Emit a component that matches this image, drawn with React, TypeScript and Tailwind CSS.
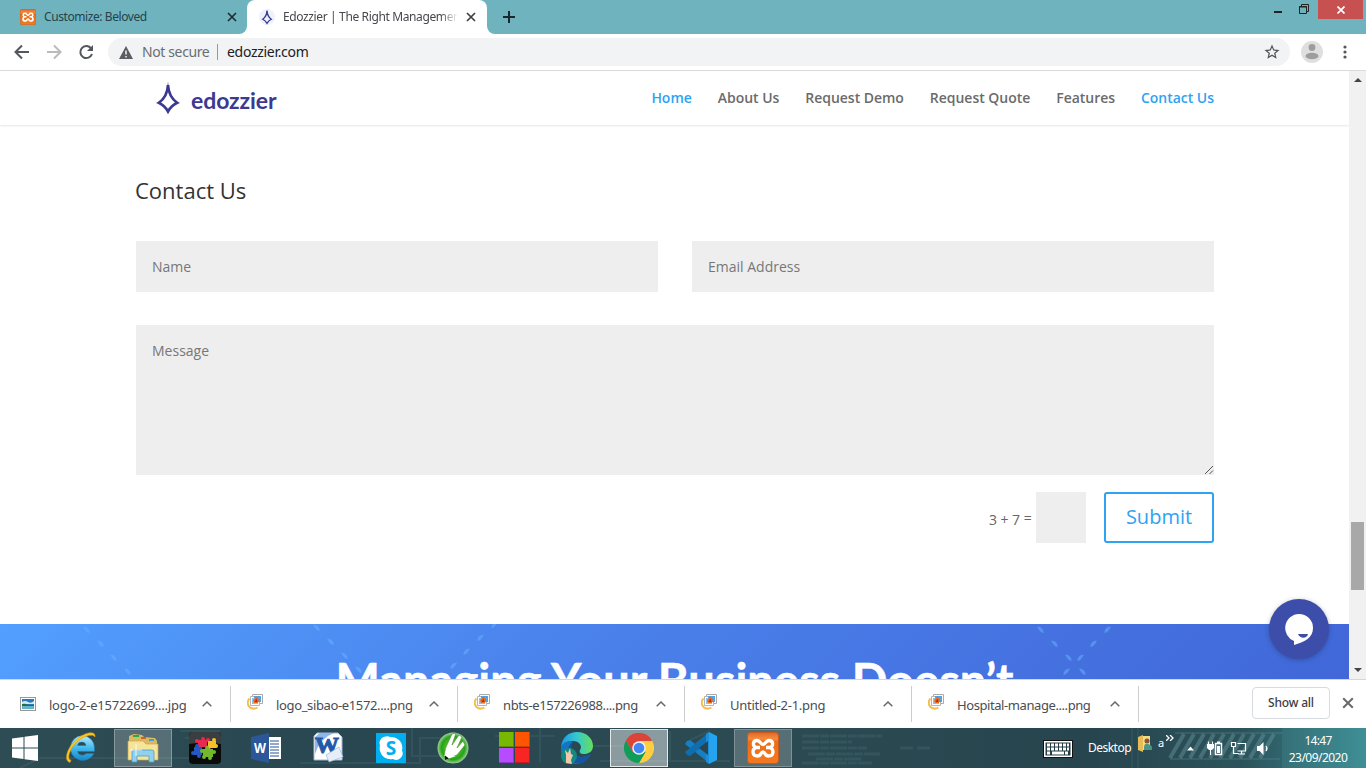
import React from "react";

const ui = "font-['Noto_Sans','Open_Sans',sans-serif]";

function Xampp({ className }: { className: string }) {
  return (
    <svg viewBox="0 0 32 32" className={className}>
      <defs>
        <linearGradient id="xg" x1="0" y1="0" x2="0" y2="1">
          <stop offset="0" stopColor="#e2662a" />
          <stop offset=".2" stopColor="#f58a3c" />
          <stop offset=".3" stopColor="#ee6d15" />
          <stop offset="1" stopColor="#f5791f" />
        </linearGradient>
      </defs>
      <rect x=".5" y=".5" width="31" height="31" rx="3" fill="url(#xg)" stroke="#c75a1c" />
      <path d="M16 12.500C13.500 12.500 13.500 8.500 10 8.500C5.500 8.500 5 14.500 9.500 15.500C4.500 17 5 24 10.500 24C14.500 24 13.500 20 16 20C18.500 20 17.500 24 21.500 24C27 24 27.500 17 22.500 15.500C27 14.500 26.500 8.500 22 8.500C18.500 8.500 18.500 12.500 16 12.500ZM9.500 15.500h3.500M22.500 15.500H19" fill="none" stroke="#fff" strokeWidth="3.300" strokeLinejoin="round" />
    </svg>
  );
}

function Star4({ className }: { className: string }) {
  return (
    <svg viewBox="0 0 24 34" className={className}>
      <path d="M12 4C11.500 12.500 9 17.500 2.800 21.800C7.500 24 10 27 12 30.500C14 27 16.500 24 21.200 21.800C15 17.500 12.500 12.500 12 4Z" fill="none" stroke="#3b3991" strokeWidth="2.700" strokeLinejoin="miter" strokeMiterlimit="6" />
      <path d="M12 .8l1.300 9h-2.600z" fill="#3b3991" />
    </svg>
  );
}

function TabClose({ className }: { className: string }) {
  return (
    <svg viewBox="0 0 10 10" className={className}>
      <path d="M1 1l8 8M9 1l-8 8" fill="none" stroke="currentColor" strokeWidth="1.700" />
    </svg>
  );
}

function TabStrip() {
  return (
    <div className={`flex h-[34px] shrink-0 bg-[#6eb3be] text-[12px] ${ui}`}>
      <div className="flex h-[34px] w-[247px] items-center rounded-br-lg pl-5">
        <Xampp className="size-4" />
        <span className="ml-2 w-[183px] whitespace-nowrap text-[#27424a] tracking-[-0.42px]">Customize: Beloved</span>
        <TabClose className="size-[10px] text-[#1f2d30]" />
      </div>
      <div className="relative flex w-[240px] items-center rounded-t-lg bg-white pl-[12px]">
        <svg viewBox="0 0 8 8" className="absolute -left-2 bottom-0 size-2"><path d="M8 0v8H0a8 8 0 0 0 8-8z" fill="#fff" /></svg>
        <svg viewBox="0 0 8 8" className="absolute -right-2 bottom-0 size-2"><path d="M0 0v8h8a8 8 0 0 1-8-8z" fill="#fff" /></svg>
        <span className="flex size-4 items-center justify-center rounded-full bg-[#edf2fb]"><Star4 className="h-[16px] w-[12px]" /></span>
        <span className="ml-2 w-[175px] overflow-hidden whitespace-nowrap text-[#45484c] tracking-[-0.37px] [mask-image:linear-gradient(to_right,black_90%,transparent)]">Edozzier | The Right Managemen</span>
        <TabClose className="ml-[8px] size-[10px] text-[#3c4043]" />
      </div>
      <svg viewBox="0 0 12 12" className="ml-[16px] mt-[11px] size-3"><path d="M6 0v12M0 6h12" stroke="#18282c" strokeWidth="2" /></svg>
      <div className="ml-auto flex pr-[3px]">
        <svg viewBox="0 0 46 20" className="h-5 w-[46px]">
          <path d="M2 12h8" stroke="#222" strokeWidth="2" />
          <path d="M27.500 6.500h7v7h-7zM27 7h8M29.500 6v-1.500h7v7h-1.500" fill="none" stroke="#222" />
        </svg>
        <div className="flex h-[19px] w-[45px] items-center justify-center bg-[#c75050]">
          <svg viewBox="0 0 8 8" className="size-2"><path d="M.5 .5l7 7M7.500 .5l-7 7" stroke="#fff" strokeWidth="1.700" /></svg>
        </div>
      </div>
    </div>
  );
}

function Toolbar() {
  return (
    <div className={`flex h-[37px] shrink-0 items-start border-b border-[#d8dadc] bg-white pt-1 text-[14px] ${ui}`}>
      <svg viewBox="0 0 108 28" className="h-7 w-[108px]" fill="none" strokeWidth="2">
        <path d="M29 14H16.500M22 7.500L15.500 14l6.500 6.500" stroke="#53575b" />
        <path d="M47 14h12.500M54 7.500l6.500 6.500l-6.500 6.500" stroke="#b9bbbd" />
        <path d="M90.800 10A6 6 0 1 0 92 16" stroke="#53575b" />
        <path d="M93 7v6h-6z" fill="#53575b" />
      </svg>
      <div className="flex h-7 w-[1182px] items-center rounded-full bg-[#f1f3f4] pl-[11px] pr-[9px]">
        <svg viewBox="0 0 14 13" className="h-[13px] w-[14px]"><path d="M7 0l7 13H0z" fill="#5a5d61" /><path d="M7 4.500v4M7 10v1.500" stroke="#f1f3f4" strokeWidth="1.500" /></svg>
        <span className="-mt-px ml-[9px] w-[67px] whitespace-nowrap text-[#6a6d71] tracking-[-0.38px]">Not secure</span>
        <span className="ml-2 h-4 w-px bg-[#96999c]" />
        <span className="-mt-px ml-[9px] whitespace-nowrap text-[#202124] tracking-[-0.3px]">edozzier.com</span>
        <svg viewBox="0 0 24 24" className="ml-auto size-[18px]"><path d="M22 9.240l-7.190-.62L12 2 9.190 8.630 2 9.240l5.460 4.730L5.820 21 12 17.270 18.180 21l-1.630-7.030L22 9.240zM12 15.400l-3.760 2.270 1-4.280-3.320-2.880 4.380-.38L12 6.100l1.710 4.040 4.380.38-3.320 2.880 1 4.280L12 15.400z" fill="#4f5357" /></svg>
      </div>
      <svg viewBox="0 0 22 22" className="ml-[11px] mt-[3px] size-[22px]"><circle cx="11" cy="11" r="11" fill="#dfdfdf" /><circle cx="11" cy="6.500" r="3.400" fill="#9d9d9d" /><ellipse cx="11" cy="15" rx="6.500" ry="3.300" fill="#9d9d9d" /></svg>
      <svg viewBox="0 0 4 14" className="ml-[20px] mt-[7px] h-[14px] w-1" fill="#53575b"><circle cx="2" cy="2" r="1.600" /><circle cx="2" cy="7" r="1.600" /><circle cx="2" cy="12" r="1.600" /></svg>
    </div>
  );
}

function SiteHeader() {
  return (
    <header className="relative flex h-[54px] shrink-0 items-start bg-white pl-[156px] shadow-[0_1px_2px_rgba(0,0,0,0.1)]">
      <Star4 className="mt-[10px] h-[34px] w-[24px]" />
      <span className="ml-[11px] mt-[13px] w-[87px] font-[Lato,sans-serif] text-[23px] font-bold leading-[32px] tracking-[-0.1px] text-[#3b3991]">edozzier</span>
      <nav className="ml-auto mr-[135px] mt-[17px] flex gap-[26px] whitespace-nowrap font-['Open_Sans',sans-serif] text-[14px] font-semibold leading-5 tracking-[-0.03px] text-[#6b6b6b]">
        <a className="text-[#2ea3f2]">Home</a>
        <a>About Us</a>
        <a>Request Demo</a>
        <a>Request Quote</a>
        <a>Features</a>
        <a className="text-[#2ea3f2]">Contact Us</a>
      </nav>
    </header>
  );
}

function ContactForm() {
  return (
    <section className="h-[499px] shrink-0 px-[135px] pt-[49px] font-['Open_Sans',sans-serif] text-[14px] text-[#666]">
      <h1 className="h-[67px] text-[22px] leading-[32px] text-[#333]">Contact Us</h1>
      <div className="ml-px flex gap-[34px]">
        <div className="h-[51px] w-[522px] bg-[#eee] px-4 leading-[51px] text-[#777]">Name</div>
        <div className="h-[51px] w-[522px] bg-[#eee] px-4 leading-[51px] text-[#777]">Email Address</div>
      </div>
      <div className="ml-px mt-[33px] flex h-[150px] justify-between bg-[#eee] pl-4 pt-4 text-[#777]">
        <span className="leading-5">Message</span>
        <svg viewBox="0 0 10 10" className="size-[10px] self-end"><path d="M1 9l8-8M5.500 9l3.500-3.500" stroke="#555" /></svg>
      </div>
      <div className="mt-[17px] flex justify-end">
        <span className="mt-[16px] w-[47px] whitespace-nowrap leading-6 tracking-[-0.05px]">3 + 7 <span className="relative -top-[2px]">=</span></span>
        <div className="h-[51px] w-[50px] bg-[#eee]" />
        <button className="ml-[18px] h-[51px] w-[110px] rounded-[3px] border-2 border-[#2ea3f2] pb-px text-[20px] text-[#2ea3f2]">Submit</button>
      </div>
    </section>
  );
}

const drops: [number, number, number][] = [
  [86, 6, 0], [100, 20, 0], [113, 34, 0], [127, 48, 0],
  [316, 4, 0], [330, 18, 0], [344, 32, 0], [358, 46, 0],
  [454, 42, 1], [467, 28, 1], [481, 14, 1], [495, 1, 1],
  [1040, 6, 0], [1054, 20, 0], [1068, 34, 0], [1082, 48, 0],
  [1108, 6, 1], [1094, 20, 1], [1081, 34, 1], [1067, 48, 1],
];

function Hero() {
  return (
    <section className="relative flex min-h-0 flex-1 justify-center overflow-hidden bg-[linear-gradient(135deg,#529fff_0%,#4a80ea_45%,#4167d8_100%)]">
      <svg viewBox="0 0 1349 55" className="absolute left-0 top-0 h-[55px] w-[1349px]">
        {drops.map(([x, y, flip], i) => (
          <path key={i} d="M-3-3C0-4 4-1 3.500 3C1 3-1 0-3-3Z" transform={`translate(${x} ${y}) scale(${flip ? -1 : 1} 1)`} fill="#68b3ff" opacity=".5" />
        ))}
      </svg>
      <h2 className="relative mt-[26px] whitespace-nowrap font-[Lato,sans-serif] text-[47px] font-bold leading-[60px] text-white [-webkit-text-stroke:0.5px_white]">Managing Your Business Doesn’t</h2>
    </section>
  );
}

function Scrollbar() {
  return (
    <div className="relative flex w-[17px] shrink-0 flex-col items-center bg-[#f1f1f1]">
      <svg viewBox="0 0 8 4" className="mt-[7px] h-1 w-2"><path d="M4 0l4 4H0z" fill="#444" /></svg>
      <div className="mt-[440px] h-[68px] w-[13px] bg-[#a8a8a8]" />
      <svg viewBox="0 0 8 4" className="mb-[7px] mt-auto h-1 w-2"><path d="M4 4l4-4H0z" fill="#444" /></svg>
    </div>
  );
}

function JpgIcon() {
  return (
    <svg viewBox="0 0 16 14" className="-mt-px h-[14px] w-4"><rect x=".5" y=".5" width="15" height="13" fill="#fff" stroke="#999" /><path d="M2 2h12v10H2z" fill="#2d79b8" /><path d="M2 5q3-2 6 0t6-1v3H2z" fill="#cfe9f7" /><path d="M2 7q4-1 6 1h6v2H2z" fill="#286c50" /><path d="M2 9h12v3H2z" fill="#63b6c6" /></svg>
  );
}

function PngIcon() {
  return (
    <svg viewBox="0 0 16 16" className="-mt-[4px] size-4"><path d="M2.500 4.500A6 6 0 0 0 2.500 13Q6 16 10.500 13.500" fill="none" stroke="#f5bd50" strokeWidth="2" /><path d="M5.500 .5h10v9h-10z" fill="#fff" stroke="#aaa" /><path d="M3.500 2.500h9v9h-9z" fill="#fff" stroke="#b5b5b5" /><path d="M7 2h7v6H7z" fill="#52a3e4" /><path d="M5 4h6v6H5z" fill="#8dc2ed" /><path d="M9.500 2.500l2.500 3-1 3.500H7l-1-3z" fill="#ee6a1c" /><path d="M9.500 4.500l1 3.500h-3z" fill="#b92c13" /></svg>
  );
}

function Downloads() {
  const files = [
    ["logo-2-e15722699....jpg", "tracking-[-0.24px]"],
    ["logo_sibao-e1572....png", "tracking-[-0.36px]"],
    ["nbts-e157226988....png", "tracking-[-0.39px]"],
    ["Untitled-2-1.png", "tracking-[-0.28px]"],
    ["Hospital-manage....png", "tracking-[-0.42px]"],
  ];
  return (
    <div className={`relative flex h-[49px] shrink-0 items-center border-t border-[#d5d7da] bg-white pl-1 ${ui}`}>
      {files.map(([name, track], i) => (
        <div key={name} className="flex h-9 w-[227px] items-center border-r border-[#ccc] pl-4">
          {i === 0 ? <JpgIcon /> : <PngIcon />}
          <span className={`ml-[13px] w-[153px] whitespace-nowrap pt-[3px] text-[13px] text-[#4a4d51] ${track}`}>{name}</span>
          <svg viewBox="0 0 10 6" className="h-[6px] w-[10px]"><path d="M.7 5.300L5 1l4.300 4.300" fill="none" stroke="#666a6e" strokeWidth="1.500" /></svg>
        </div>
      ))}
      <button className="-mt-[3px] ml-auto h-8 w-[78px] rounded-[4px] border border-[#d7dade] text-[12px] font-medium text-[#3c4043] tracking-[-0.2px]">Show all</button>
      <TabClose className="ml-[12px] mr-[12px] -mt-[2px] size-[12px] text-[#686b6e]" />
    </div>
  );
}

const s32 = "size-8";

function TaskIcons() {
  const slot = "flex h-[38px] w-[58px] shrink-0 items-center justify-center";
  return (
    <div className="relative ml-[-4px] mt-px flex gap-[4px]">
      <div className={slot}><svg viewBox="0 0 26 26" className="size-[26px]" fill="#fff"><path d="M0 3.500l11.500-1.600V12.500H0zM12.500 1.700L26 0v12.500H12.500zM0 13.500h11.500v10.600L0 22.500zM12.500 13.500H26V26l-13.500-1.800z" /></svg></div>
      <div className={`${slot} -ml-[6px]`}>
        <svg viewBox="0 0 32 32" className={s32}>
          <defs><linearGradient id="ie" x1="0" y1="0" x2="0" y2="1"><stop stopColor="#b9edff" /><stop offset=".5" stopColor="#43b9ee" /><stop offset="1" stopColor="#1789c8" /></linearGradient></defs>
          <path fillRule="evenodd" d="M17 3.500a12.500 12.500 0 0 1 12.500 13v3H12.500a4.800 4.300 0 0 0 8.500 2h8a12.500 12.500 0 1 1-12-18zM12.500 13.500H21a4.300 4 0 0 0-8.500 0z" fill="url(#ie)" stroke="#1a77b0" strokeWidth=".5" />
          <path d="M5 30.500C-2 29 2 15 12 7S31-1 30 5c-2-3-9-2-17 4S1 28 6 28z" fill="#fbc521" stroke="#d99a10" strokeWidth=".5" />
        </svg>
      </div>
      <div className={`${slot} border border-[#87989e] bg-white/20`}>
        <svg viewBox="0 0 34 30" className="h-[30px] w-[34px]">
          <path d="M3 3l5-2 8 1 2 2 11 1 2 3v18H3z" fill="#d9ba62" /><path d="M7 2h6v2H7z" fill="#28aa4c" /><path d="M15 4h5v2h-5z" fill="#e3543b" /><path d="M23 6h5v2h-5z" fill="#3da0e5" />
          <path d="M2 8h15l3 3h12v16H2z" fill="#f7e49b" stroke="#c9a850" strokeWidth=".7" />
          <path d="M6 29V19q0-2 2-2h18q2 0 2 2v10h-5v-6H11v6z" fill="#90d2ee" stroke="#4b9dc3" strokeWidth=".8" />
          <path d="M10 11v12M4 17h12" stroke="#fff" strokeWidth=".8" />
        </svg>
      </div>
      <div className={slot}>
        <svg viewBox="0 0 32 32" className={s32}>
          <rect width="32" height="32" rx="4" fill="#0b0b0c" /><path d="M4 0h24q4 0 4 5v7q-16-3-32 0V5q0-5 4-5z" fill="#3b3e41" />
          <g fill="#e9294e"><path d="M9 8h9v7H9z" /><circle cx="8" cy="9" r="2" /><circle cx="14" cy="7" r="2" /><circle cx="19" cy="8" r="2" /></g>
          <g fill="#f4c128"><path d="M19 9h8v7h-8z" /><circle cx="25" cy="8" r="2" /><circle cx="27" cy="14" r="2" /><circle cx="20" cy="15" r="2" /></g>
          <g fill="#2458c4"><path d="M5 15h8v8H5z" /><circle cx="8" cy="14" r="2" /><circle cx="4" cy="21" r="2" /><circle cx="10" cy="24" r="2" /></g>
          <g fill="#72b82d"><path d="M14 17h10v8H14z" /><circle cx="13" cy="19" r="2" /><circle cx="18" cy="16" r="2" /><circle cx="25" cy="20" r="2" /><circle cx="21" cy="26" r="2" /><circle cx="15" cy="25" r="2" /></g>
        </svg>
      </div>
      <div className={slot}>
        <svg viewBox="0 0 32 30" className="mr-[2px] h-[30px] w-8"><path d="M17 4h14v22H17z" fill="#fff" /><path d="M20 8h9M20 11h9M20 14h9M20 17h9M20 20h9M20 23h9" stroke="#2b579a" strokeWidth="1.200" /><path d="M1 4L19 0v30L1 26z" fill="#2b579a" /><text x="10" y="19.500" textAnchor="middle" fontSize="14" fontWeight="700" fontFamily="Open Sans" fill="#fff" textLength="12" lengthAdjust="spacingAndGlyphs">W</text></svg>
      </div>
      <div className={slot}>
        <svg viewBox="0 0 32 32" className="mr-[3px] -mt-[3px] size-8"><path d="M5 2h21l4 4v23H2V5z" fill="#fff" stroke="#9fb8da" /><path d="M3 6l5-4h14q-14 5-19 21z" fill="#8cb7e8" /><text x="15" y="21.500" textAnchor="middle" fontSize="24" fontWeight="700" fontFamily="Liberation Serif" fill="#2359a8" stroke="#2359a8" strokeWidth="1">W</text><path d="M14 24l13-8 4 10-14 5z" fill="#e6eef9" stroke="#92a9c9" strokeWidth=".6" /></svg>
      </div>
      <div className={slot}>
        <svg viewBox="0 0 30 30" className="size-[30px]"><path d="M0 0h30v30H0z" fill="#00aff0" /><path d="M10 3.500a6.500 6.500 0 0 0-6 9a11 11 0 0 0 13 13.500a6.500 6.500 0 0 0 9-8.500A11 11 0 0 0 14 4q-2-1-4-.5z" fill="#fff" /><text x="15" y="22" textAnchor="middle" fontSize="19" fontWeight="700" fontFamily="Open Sans" fill="#00aff0">S</text></svg>
      </div>
      <div className={slot}>
        <svg viewBox="0 0 32 32" className={s32}><defs><radialGradient id="cg"><stop stopColor="#75e32b" /><stop offset=".75" stopColor="#27a31b" /><stop offset="1" stopColor="#9bd293" /></radialGradient></defs><circle cx="16" cy="16" r="15.500" fill="url(#cg)" /><path d="M9 15l6-13 4-1-4 12 7-10 3 2-5 11 6-7 2 4-8 10-10 4-3-3z" fill="#fff" stroke="#4c9932" strokeWidth=".7" /><path d="M9 15l3 8 7 1-11 4z" fill="#fff" /><path d="M8 23.500l4 3-4 1.500z" fill="#111" /></svg>
      </div>
      <div className={slot}>
        <svg viewBox="0 0 31 31" className="mr-px -mt-px size-[31px]"><path d="M0 0h15v15H0z" fill="#76b900" /><path d="M16 0h15v15H16z" fill="#ff5500" /><path d="M0 16h15v15H0z" fill="#b64bff" /><path d="M16 16h15v15H16z" fill="#f92424" /><path d="M0 14.500h14.500V0M16 14.500h14.500V0M0 30.500h14.500V16M16 30.500h14.500V16" fill="none" stroke="#000" strokeOpacity=".22" strokeWidth="1" /></svg>
      </div>
      <div className={slot}>
        <svg viewBox="0 0 32 32" className={s32}><defs><linearGradient id="ed"><stop stopColor="#2197df" /><stop offset=".5" stopColor="#36c8d0" /><stop offset="1" stopColor="#65df59" /></linearGradient></defs><path d="M0 15C1 5 8 0 16 0c10 0 16 7 16 14 0 6-5 8-9 8-4 0-5-2-4-4 3-4-1-9-7-9Q4 9 0 15z" fill="url(#ed)" /><path d="M0 15c2-5 7-7 12-5-5 4-5 12 3 14 5 2 11 1 15-2-3 6-9 10-15 10C5 32-1 24 0 15z" fill="#1474c0" /><path d="M12 10c-4 7 0 15 9 15q5 0 9-3-5 11-16 9C4 25 6 13 12 10z" fill="#1555a1" /><circle cx="8" cy="24" r="8" fill="#138983" /><path d="M5 31v-8l-1-5 3 3 2-5 1 6 2 1-2 5 1 4z" fill="#efc9ac" /></svg>
      </div>
      <div className={`${slot} border border-[#e4e8e9] bg-white/45`}>
        <svg viewBox="0 0 30 30" className="size-[30px]"><path d="M15 15L2 7.500A15 15 0 0 1 28 7.500z" fill="#db4437" /><path d="M15 7.500h13A15 15 0 0 1 15 30l6.500-11z" fill="#ffcd40" /><path d="M2 7.500A15 15 0 0 0 15 30l6.500-11L15 15l-6.500 3.500z" fill="#0f9d58" /><path d="M15 8h13A15 15 0 0 0 2 7.500l6.500 11z" fill="#db4437" /><circle cx="15" cy="15" r="6.800" fill="#f1f1f1" /><circle cx="15" cy="15" r="5.300" fill="#4285f4" /></svg>
      </div>
      <div className={slot}>
        <svg viewBox="0 0 32 32" className={s32}><path d="M2 9l3-1 19 15v8L0 12z" fill="#1680c4" /><path d="M0 20L24 0v9L5 24l-3-1z" fill="#0f6eb0" /><path d="M24 0l8 4v24l-8 4V0z" fill="#24a4ef" /><path d="M24 0l-3 2v28l3 2z" fill="#1d8fd8" /><path d="M23 9v14l-9-7z" fill="#29464f" /></svg>
      </div>
      <div className={`${slot} border border-[#7f9195] bg-white/20`}><Xampp className={s32} /></div>
    </div>
  );
}

function Taskbar() {
  return (
    <div className={`relative flex h-10 shrink-0 overflow-hidden bg-[linear-gradient(90deg,#2e4c54,#294750_25%,#2c4a52_57%,#27454e_80%,#2c535b_91%,#34767f_97%,#3b8991)] text-white ${ui}`}>
      <svg viewBox="0 0 1366 40" className="absolute left-0 top-0 h-10 w-[1366px]" fill="none" stroke="#6996a0" strokeOpacity=".22">
        <path d="M20 40L40 30h150M180 3h40M185 10h20M300 35h120v-25h30M412 0v28h42V4M495 8h60M540 0v35M592 18h60M670 3v30M690 12l20-9M600 33h130" strokeOpacity=".15" strokeWidth="2" />
        <path d="M802 8h80M802 14h50M802 20h65M808 26h72M816 31h45M802 35h70M900 20h13M917 20h13" strokeOpacity=".16" strokeWidth="3" strokeDasharray="17 1 9 1" />
        <path d="M1132 0v40M1138 0v40" /><path d="M1175 5h107M1170 31h110" strokeWidth="2" />
        <path d="M1170 30l14-24M1180 30l14-24M1190 30l14-24M1200 30l14-24M1210 30l14-24M1220 30l14-24M1230 30l14-24M1240 30l14-24M1250 30l14-24M1260 30l14-24" strokeOpacity=".45" strokeWidth="4" />
        <path d="M1282 0h84v40h-84z" fill="#5fb5b8" fillOpacity=".15" stroke="none" />
      </svg>
      <TaskIcons />
      <div className="relative ml-auto flex w-[323px] text-[12px]">
        <svg viewBox="0 0 30 18" className="mt-[12px] h-[18px] w-[30px] shrink-0"><rect x=".5" y=".5" width="29" height="17" fill="#fff" stroke="#111" /><path d="M2.500 2.500h25v13h-25z" fill="#263c43" /><path d="M4 5h22M4 9h22M4 13h4M22 13h4" stroke="#fff" strokeWidth="3" strokeDasharray="3 1" /><path d="M9 13h12" stroke="#fff" strokeWidth="3" /></svg>
        <span className="ml-[15px] mt-[11px] w-[50px] tracking-[-0.52px]">Desktop</span>
        <svg viewBox="0 0 15 17" className="mt-[7px] h-[17px] w-[15px] shrink-0"><path d="M0 2l5-2v17l-5-2z" fill="#e6bd54" /><path d="M5 1h7v14H5z" fill="#f6db85" /><circle cx="9" cy="6" r="2.500" fill="#865438" /><path d="M6 13q0-5 4-4 4 1 4 4v2H6z" fill="#4c9581" /></svg>
        <span className="ml-[5px] mt-[7px] w-[8px] text-[11px]">a</span>
        <svg viewBox="0 0 8 6" className="mt-[7px] h-[6px] w-2 shrink-0"><path d="M0 0l3 3-3 3M4 0l3 3-3 3" fill="none" stroke="#fff" strokeWidth="1.300" /></svg>
        <svg viewBox="0 0 90 20" className="ml-[10px] mt-[10px] h-5 w-[90px] shrink-0" fill="none" stroke="#fff" strokeWidth="1.200">
          <path d="M3 12.500l3.500-4 3.500 4z" fill="#fff" stroke="none" />
          <path d="M24.500 3.500v3M28.500 3.500v3M26.500 11v6" /><path d="M23 6h7v4l-2 2h-3l-2-2z" fill="#fff" stroke="none" /><path d="M31.500 5.500h6v11h-6z" stroke="#fff" strokeWidth="1.500" /><path d="M33 3.500h3v2h-3z" fill="#fff" stroke="none" /><path d="M33 8h3v7h-3z" fill="#fff" stroke="none" />
          <path d="M47.500 4.500h4v4h-4zM49.500 8.500v7h5M53.500 5.500h8v7.500h-8M57.500 13v3M54 16h7" />
          <path d="M73 8h2.500l4-4v13l-4-4H73z" fill="#fff" stroke="none" /><path d="M82 8q2 2.500 0 5" />
        </svg>
        <div className="absolute left-[242px] top-[4px] w-[66px] text-center leading-[17px]"><div className="tracking-[-0.7px]">14:47</div><div className="tracking-[-0.53px]">23/09/2020</div></div>
      </div>
    </div>
  );
}

export default function App() {
  return (
    <div className="relative flex h-[768px] w-[1366px] flex-col overflow-hidden bg-white">
      <TabStrip />
      <Toolbar />
      <div className="flex h-[608px] shrink-0">
        <main className="flex w-[1349px] flex-col overflow-hidden bg-white">
          <SiteHeader />
          <ContactForm />
          <Hero />
        </main>
        <Scrollbar />
      </div>
      <Downloads />
      <Taskbar />
      <div className="absolute left-[1269px] top-[599px] flex size-[60px] items-center justify-center rounded-full bg-[#3d4daa] shadow-[0_1px_5px_rgba(0,0,0,0.25)]">
        <svg viewBox="0 0 28 31" className="h-[31px] w-7"><path d="M14 0a14 14 0 0 1 14 14c0 10-9 14-19 17v-4A14 14 0 0 1 14 0z" fill="#fff" /><path d="M13 20h10c-1 5-8 5-10 0z" fill="#3d4daa" /></svg>
      </div>
    </div>
  );
}
